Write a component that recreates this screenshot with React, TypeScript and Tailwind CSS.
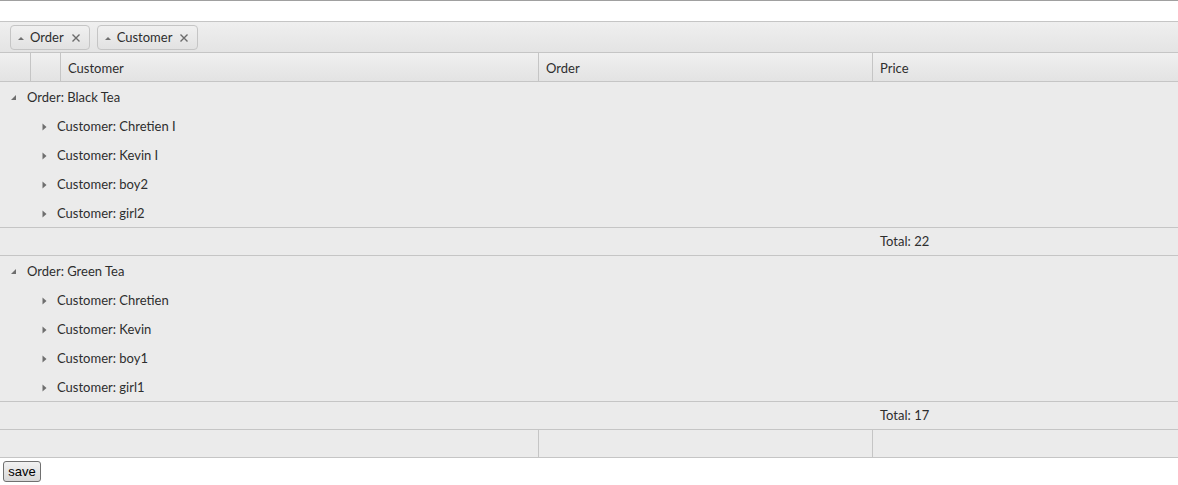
import React from "react"

type Group = { order: string; customers: string[]; total: number }

const groups: Group[] = [
  { order: "Black Tea", customers: ["Chretien I", "Kevin I", "boy2", "girl2"], total: 22 },
  { order: "Green Tea", customers: ["Chretien", "Kevin", "boy1", "girl1"], total: 17 },
]

function CollapseIcon() {
  return (
    <svg width="7" height="7" viewBox="0 0 7 7" className="shrink-0">
      <path d="M6 1 L6 6 L1 6 Z" fill="#6e6e6e" />
    </svg>
  )
}

function ExpandIcon() {
  return (
    <svg width="5" height="8" viewBox="0 0 5 8" className="shrink-0">
      <path d="M0.5 0.5 L4.5 4 L0.5 7.5 Z" fill="#6e6e6e" />
    </svg>
  )
}

function SortUp() {
  return (
    <svg width="6" height="4" viewBox="0 0 6 4" className="shrink-0">
      <path d="M0 4 L3 1 L6 4 Z" fill="#707070" />
    </svg>
  )
}

function CloseX() {
  return (
    <svg width="10" height="10" viewBox="0 0 10 10" className="shrink-0">
      <path d="M1.5 1.5 L8.5 8.5 M8.5 1.5 L1.5 8.5" stroke="#6b6b6b" strokeWidth="1.4" />
    </svg>
  )
}

function Chip({ label }: { label: string }) {
  return (
    <div className="flex h-[25px] items-center rounded-[4px] border border-[#c5c5c5] bg-gradient-to-b from-[#f0f0f0] to-[#e2e2e2] pl-[7px] pr-[8px]">
      <SortUp />
      <span className="ml-[6px]">{label}</span>
      <span className="ml-[7px] flex items-center">
        <CloseX />
      </span>
    </div>
  )
}

export default function App() {
  return (
    <div
      className="w-[1178px] bg-white text-[13px] text-[#2e2e2e]"
      style={{ fontFamily: "Lato, 'Open Sans', sans-serif" }}
    >
      <div className="h-[21px] border-t border-[#a0a0a0]" />

      <div className="border-t border-b border-[#c5c5c5] bg-[#ebebeb]">
        {/* group-by toolbar */}
        <div className="flex h-[30px] items-center gap-[7px] bg-gradient-to-b from-[#efefef] to-[#e4e4e4] pl-[10px] pt-[1px]">
          <Chip label="Order" />
          <Chip label="Customer" />
        </div>

        {/* header */}
        <div className="flex h-[30px] border-t border-b border-[#c5c5c5] bg-gradient-to-b from-[#f0f0f0] to-[#e3e3e3]">
          <div className="w-[31px] border-r border-[#c5c5c5]" />
          <div className="w-[30px] border-r border-[#c5c5c5]" />
          <div className="flex w-[478px] items-center border-r border-[#c5c5c5] pl-[7px] pt-[3px]">Customer</div>
          <div className="flex w-[334px] items-center border-r border-[#c5c5c5] pl-[7px] pt-[3px]">Order</div>
          <div className="flex flex-1 items-center pl-[7px] pt-[3px]">Price</div>
        </div>

        {groups.map((g) => (
          <div key={g.order}>
            <div className="flex h-[29px] items-center pl-[10px] pt-[2px]">
              <CollapseIcon />
              <span className="ml-[10px]">Order: {g.order}</span>
            </div>
            {g.customers.map((c) => (
              <div key={c} className="flex h-[29px] items-center pl-[42px] pt-[2px]">
                <ExpandIcon />
                <span className="ml-[10px]">Customer: {c}</span>
              </div>
            ))}
            <div className="flex h-[29px] border-t border-b border-[#c5c5c5]">
              <div className="w-[872px]" />
              <div className="flex flex-1 items-center pl-[8px]">Total: {g.total}</div>
            </div>
          </div>
        ))}

        {/* footer */}
        <div className="flex h-[27px]">
          <div className="w-[539px] border-r border-[#c5c5c5]" />
          <div className="w-[334px] border-r border-[#c5c5c5]" />
          <div className="flex-1" />
        </div>
      </div>

      <div className="pl-[3px] pt-[3px] pb-[4px]">
        <button
          className="h-[21px] w-[38px] rounded-[3px] border border-[#707070] bg-gradient-to-b from-[#f2f2f2] to-[#d8d8d8] text-[13px] leading-none text-black"
          style={{ fontFamily: "'Liberation Sans', Arial, sans-serif" }}
        >
          save
        </button>
      </div>
    </div>
  )
}
